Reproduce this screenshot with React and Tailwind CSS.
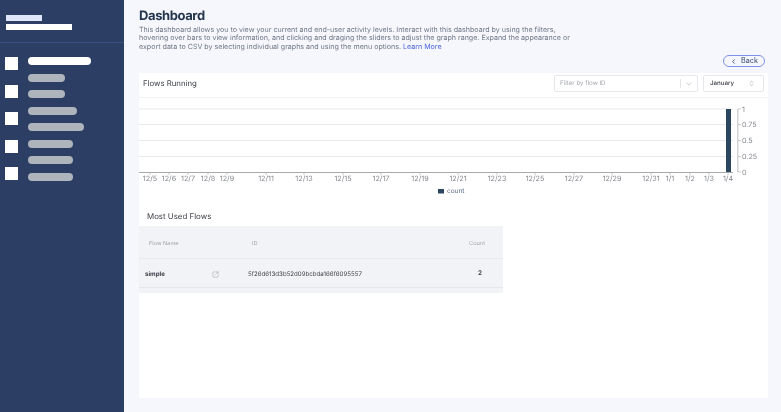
import React from 'react'
import { ChevronLeft, ChevronDown, ChevronsUpDown, SquareArrowOutUpRight } from 'lucide-react'

const pills = [
  { width: 'w-[63px]', color: 'bg-white' },
  { width: 'w-[37px]', color: 'bg-[#aeb4bc]' },
  { width: 'w-[37px]', color: 'bg-[#aeb4bc]' },
  { width: 'w-[49px]', color: 'bg-[#aeb4bc]' },
  { width: 'w-[56px]', color: 'bg-[#aeb4bc]' },
  { width: 'w-[45px]', color: 'bg-[#aeb4bc]' },
  { width: 'w-[45px]', color: 'bg-[#aeb4bc]' },
  { width: 'w-[45px]', color: 'bg-[#aeb4bc]' },
]

const dates = [
  ['12/5', 150], ['12/6', 169], ['12/7', 188], ['12/8', 208], ['12/9', 227],
  ['12/11', 266], ['12/13', 304], ['12/15', 343], ['12/17', 381], ['12/19', 420],
  ['12/21', 458], ['12/23', 497], ['12/25', 535], ['12/27', 574], ['12/29', 612],
  ['12/31', 651], ['1/1', 670], ['1/2', 690], ['1/3', 709], ['1/4', 728],
]

const yTicks = [
  ['1', 109], ['0.75', 124.5], ['0.5', 140.5], ['0.25', 156.5], ['0', 172],
]

const Chart = () => (
  <svg width="629" height="92" viewBox="139 103 629 92" className="block">
    {yTicks.slice(0, 4).map(([label, y]) => (
      <line key={label} x1="139" x2="733" y1={y} y2={y} stroke="#e9e9ec" strokeWidth="1" />
    ))}
    <line x1="139" x2="733" y1="172.5" y2="172.5" stroke="#a9a9ab" strokeWidth="1" />
    {dates.map(([label, x]) => (
      <g key={label}>
        <line x1={x} x2={x} y1="172" y2="175" stroke="#a9a9ab" strokeWidth="0.6" />
        <text x={x} y="181" textAnchor="middle" fontSize="7.2" fill="#85878d" fontFamily="Inter, sans-serif">{label}</text>
      </g>
    ))}
    <rect x="726" y="109" width="5" height="63" fill="#2c4660" />
    <rect x="737" y="109" width="1.5" height="63" fill="#d4d4d6" />
    {yTicks.map(([label, y]) => (
      <g key={label}>
        <line x1="738" x2="741" y1={y} y2={y} stroke="#a9a9ab" strokeWidth="0.6" />
        <text x="742" y={y + 2.6} fontSize="7.2" fill="#85878d" fontFamily="Inter, sans-serif">{label}</text>
      </g>
    ))}
    <rect x="438" y="189" width="6" height="4.5" fill="#2c4660" />
    <text x="447" y="193" fontSize="6.5" fill="#5c6f86" fontFamily="Inter, sans-serif">count</text>
  </svg>
)

const App = () => {
  return (
    <div className="flex h-[412px] w-[781px] overflow-hidden bg-[#f6f7fd] font-['Inter',sans-serif] [text-rendering:geometricPrecision]">
      <aside className="w-[124px] shrink-0 bg-[#2c3e63]">
        <div className="h-[43px] border-b border-[#3a5283] pl-[6px] pt-[15px]">
          <div className="h-[6px] w-[36px] bg-[#dfe6fa]" />
          <div className="mt-[3px] h-[6px] w-[66px] bg-white" />
        </div>
        <div className="flex gap-[10px] pl-[5px] pt-[14px]">
          <div className="flex flex-col gap-[14.5px]">
            {[0, 1, 2, 3, 4].map((i) => (
              <div key={i} className="h-[13px] w-[13px] bg-white" />
            ))}
          </div>
          <div className="flex flex-col gap-[8.5px]">
            {pills.map((pill, i) => (
              <div key={i} className={`h-[8px] rounded-full ${pill.width} ${pill.color}`} />
            ))}
          </div>
        </div>
      </aside>

      <main className="flex-1 pl-[15px] pr-[13px] pt-[9px] will-change-transform">
        <h1 className="text-[13px] font-bold leading-[15px] tracking-[-0.4px] text-[#24364e]">Dashboard</h1>
        <p className="mt-[2px] w-[432px] text-[7.1px] leading-[8.4px] text-[#6f7785]">
          This dashboard allows you to view your current and end-user activity levels. Interact with this dashboard by using the filters, hovering over bars to view information, and clicking and draging the sliders to adjust the graph range. Expand the appearance or export data to CSV by selecting individual graphs and using the menu options. <span className="text-[#4a63e0]">Learn More</span>
        </p>

        <div className="mt-[4px] flex justify-end pr-[3px]">
          <button className="flex h-[12px] w-[42px] items-center justify-center gap-[4px] rounded-full border border-[#7f90ea] text-[7.2px] text-[#34466e]">
            <ChevronLeft className="h-[7px] w-[7px]" strokeWidth={3} />
            Back
          </button>
        </div>

        <section className="mt-[6px] h-[325px] bg-white">
          <div className="flex h-[25px] items-center justify-between border-b border-[#f1f2f5] pb-[3px] pl-[4px] pr-[4px]">
            <h2 className="mt-[1px] text-[7.8px] text-[#3d4148]">Flows Running</h2>
            <div className="flex gap-[5px]">
              <div className="flex h-[17px] w-[144px] items-center justify-between rounded-[2px] border border-[#e6e7ea] pl-[5px] pr-[4px] text-[6.2px] text-[#a3a6ac]">
                Filter by flow ID
                <div className="flex h-[9px] items-center border-l border-[#e3e4e7] pl-[4px]">
                  <ChevronDown className="h-[8px] w-[8px] text-[#b4b6ba]" />
                </div>
              </div>
              <div className="flex h-[17px] w-[61px] items-center justify-between rounded-[2px] border border-[#e6e7ea] pl-[6px] pr-[8px] text-[6.2px] font-medium text-[#3a3d44]">
                January
                <ChevronsUpDown className="h-[7px] w-[7px] text-[#9a9ca2]" />
              </div>
            </div>
          </div>

          <div className="pt-[5px]">
            <Chart />
          </div>

          <h2 className="mt-[16px] pl-[8px] text-[7.9px] leading-[11px] text-[#3d4148]">Most Used Flows</h2>
          <div className="mt-[4px] w-[364px] bg-[#f1f3f7] pb-[5px]">
            <div className="flex h-[33px] items-center border-b border-[#e8eaef] pt-[3px] text-[5.6px] text-[#a3a6ac]">
              <span className="w-[113px] pl-[10px]">Flow Name</span>
              <span className="flex-1">ID</span>
              <span className="pr-[18px]">Count</span>
            </div>
            <div className="flex h-[29px] items-center border-b border-[#e4e6eb] pt-[2px] text-[6.13px] text-[#3a3d44]">
              <span className="w-[73px] pl-[6px] font-bold">simple</span>
              <SquareArrowOutUpRight className="h-[7px] w-[7px] text-[#a9abb0]" strokeWidth={2} />
              <span className="ml-[29px] flex-1">5f26d613d3b52d09bcbda166f6095557</span>
              <span className="pr-[21px] text-[6.4px] font-semibold">2</span>
            </div>
          </div>
        </section>
      </main>
    </div>
  )
}

export default App
